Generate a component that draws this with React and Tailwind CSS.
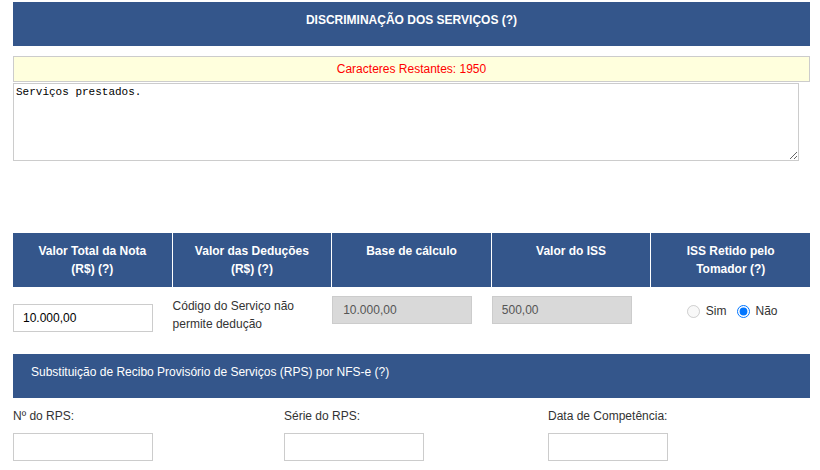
import React from "react";

const HEAD = "bg-[#34568b] text-white";

function Th({ children }) {
  return (
    <div className={`${HEAD} h-[54px] pt-[9px] text-center font-bold leading-[18px] text-[12px]`}>
      {children}
    </div>
  );
}

export default function App() {
  return (
    <div
      className="w-[820px] h-[470px] bg-white text-[#333] text-[12px] overflow-hidden"
      style={{ fontFamily: '"Liberation Sans", Arial, sans-serif' }}
    >
      <div className="ml-[13px] w-[797px] pt-[2px]">
        <div className={`${HEAD} h-[44px] pt-[10px] text-center font-bold leading-[16px]`}>
          DISCRIMINAÇÃO DOS SERVIÇOS (?)
        </div>
        <div className="mt-[10px] h-[26px] border border-[#cccccc] bg-[#ffffdd] text-[#ff0000] flex items-center justify-center">
          Caracteres Restantes: 1950
        </div>
        <textarea
          readOnly
          defaultValue="Serviços prestados."
          className="block mt-px w-[786px] h-[78px] border border-[#cccccc] p-[2px] text-[11px] leading-[13px] text-black outline-none"
          style={{ fontFamily: '"Liberation Mono", "Courier New", monospace', resize: "both" }}
        />
        <div className="mt-[72px] grid grid-cols-5 gap-px">
          <Th>
            Valor Total da Nota
            <br />
            (R$) (?)
          </Th>
          <Th>
            Valor das Deduções
            <br />
            (R$) (?)
          </Th>
          <Th>Base de cálculo</Th>
          <Th>Valor do ISS</Th>
          <Th>
            ISS Retido pelo
            <br />
            Tomador (?)
          </Th>
        </div>
        <div className="grid grid-cols-5 gap-px h-[67px]">
          <div className="pt-[17px]">
            <input
              readOnly
              defaultValue="10.000,00"
              className="block w-[140px] h-[28px] border border-[#cccccc] pl-[9px] text-[12px] text-black outline-none"
            />
          </div>
          <div className="pt-[10px] leading-[18px]">
            Código do Serviço não
            <br />
            permite dedução
          </div>
          <div className="pt-[9px]">
            <input
              readOnly
              defaultValue="10.000,00"
              className="block w-[140px] h-[28px] border border-[#cccccc] bg-[#d9d9d9] pl-[10px] text-[12px] text-[#555] outline-none"
            />
          </div>
          <div className="pt-[9px]">
            <input
              readOnly
              defaultValue="500,00"
              className="block w-[140px] h-[28px] border border-[#cccccc] bg-[#d9d9d9] pl-[9px] text-[12px] text-[#555] outline-none"
            />
          </div>
          <div className="pt-[17px] flex justify-center">
            <div className="flex items-center h-[14px] pl-[3px]">
              <input type="radio" name="iss" disabled className="m-0 w-[13px] h-[13px]" />
              <span className="ml-[6px]">Sim</span>
              <input type="radio" name="iss" checked readOnly className="m-0 ml-[10px] w-[13px] h-[13px]" />
              <span className="ml-[6px]">Não</span>
            </div>
          </div>
        </div>
        <div className={`${HEAD} h-[44px] pt-[10px] pl-[18px] leading-[16px]`}>
          Substituição de Recibo Provisório de Serviços (RPS) por NFS-e (?)
        </div>
        <div className="mt-[10px] flex">
          <div className="w-[271px]">
            <div className="leading-[16px]">Nº do RPS:</div>
            <input readOnly className="block mt-[9px] w-[140px] h-[28px] border border-[#cccccc] outline-none" />
          </div>
          <div className="w-[264px]">
            <div className="leading-[16px]">Série do RPS:</div>
            <input readOnly className="block mt-[9px] w-[140px] h-[28px] border border-[#cccccc] outline-none" />
          </div>
          <div>
            <div className="leading-[16px]">Data de Competência:</div>
            <input readOnly className="block mt-[9px] w-[120px] h-[28px] border border-[#cccccc] outline-none" />
          </div>
        </div>
      </div>
    </div>
  );
}
